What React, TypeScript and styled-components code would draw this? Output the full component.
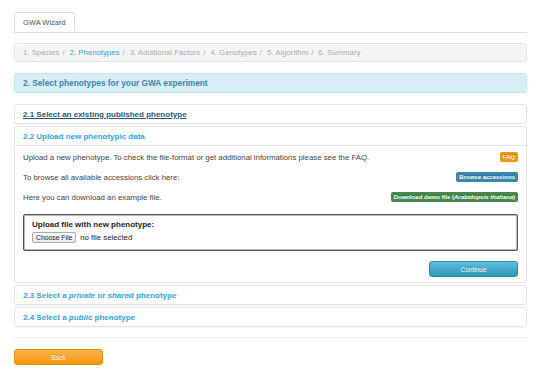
import React from "react";
import styled, { createGlobalStyle } from "styled-components";

const Global = createGlobalStyle`
  html, body { margin: 0; padding: 0; background: #fff; }
  body { font-family: "Liberation Sans", Arial, sans-serif; font-size: 7.8px; color: #333; }
`;

const Page = styled.div`
  width: 513px;
  padding: 12px 0 0 14px;
`;

const Tabs = styled.div`
  display: flex;
  border-bottom: 1px solid #ddd;
  height: 20px;
`;

const Tab = styled.div`
  height: 20px;
  box-sizing: border-box;
  padding: 0 8px;
  display: flex;
  align-items: center;
  border: 1px solid #ddd;
  border-bottom: 1px solid #fff;
  border-radius: 3px 3px 0 0;
  background: #fff;
  color: #555;
  font-size: 7.5px;
  margin-bottom: -1px;
`;

const Breadcrumb = styled.div`
  margin-top: 10px;
  height: 19px;
  box-sizing: border-box;
  border: 1px solid #e3e3e3;
  border-radius: 3px;
  background: #f5f5f5;
  display: flex;
  align-items: center;
  padding-left: 8px;
  color: #999;
  box-shadow: inset 0 1px 0 #fff;
`;

const Crumb = styled.span<{ $active?: boolean }>`
  color: ${(p) => (p.$active ? "#2fa4e7" : "#aaa")};
`;

const Sep = styled.span`
  color: #aaa;
  padding: 0 5px 0 3px;
`;

const Alert = styled.div`
  margin-top: 11px;
  height: 20px;
  box-sizing: border-box;
  border: 1px solid #bce8f1;
  border-radius: 3px;
  background: #d9edf7;
  color: #3a87ad;
  font-weight: bold;
  font-size: 8.3px;
  display: flex;
  align-items: center;
  padding-left: 8px;
`;

const Accordion = styled.div`
  margin-top: 11px;
  display: flex;
  flex-direction: column;
  gap: 2px;
`;

const Group = styled.div`
  border: 1px solid #e5e5e5;
  border-radius: 3px;
  box-shadow: 0 1px 1px rgba(0, 0, 0, 0.04);
`;

const Heading = styled.div<{ $open?: boolean }>`
  height: 18px;
  display: flex;
  align-items: center;
  padding-left: 8px;
  font-weight: bold;
  font-size: 8px;
  color: #2fa4e7;
  border-bottom: ${(p) => (p.$open ? "1px solid #e5e5e5" : "none")};
`;

const HeadLink = styled.span<{ $hover?: boolean }>`
  color: ${(p) => (p.$hover ? "#2a5a75" : "#2fa4e7")};
  text-decoration: ${(p) => (p.$hover ? "underline" : "none")};
`;

const Body = styled.div`
  padding: 1px 8px 5px 8px;
`;

const Row = styled.div`
  height: 20px;
  display: flex;
  align-items: center;
  justify-content: space-between;
  color: #444;
`;

const Badge = styled.span<{ $bg: string }>`
  background: ${(p) => p.$bg};
  color: #fff;
  font-weight: bold;
  font-size: 6px;
  padding: 1px 3px;
  border-radius: 2px;
  line-height: 8px;
  text-shadow: 0 -1px 0 rgba(0, 0, 0, 0.25);
`;

const UploadBox = styled.div`
  margin-top: 7px;
  height: 37px;
  box-sizing: border-box;
  border: 1px solid #555;
  border-radius: 2px;
  box-shadow: inset 0 0 0 0.5px #777;
  padding: 5px 8px;
  display: flex;
  flex-direction: column;
  gap: 3px;
`;

const UploadLabel = styled.div`
  font-weight: bold;
  font-size: 8px;
  color: #222;
`;

const FileRow = styled.div`
  display: flex;
  align-items: center;
  gap: 4px;
  color: #222;
`;

const FileButton = styled.span`
  height: 11px;
  box-sizing: border-box;
  padding: 0 3px;
  border: 1px solid #aaa;
  border-radius: 2px;
  background: linear-gradient(#fff, #e6e6e6);
  font-size: 6.8px;
  display: flex;
  align-items: center;
  color: #222;
`;

const Actions = styled.div`
  margin-top: 10px;
  display: flex;
  justify-content: flex-end;
`;

const Button = styled.div<{ $from: string; $to: string; $border: string; $w: number }>`
  width: ${(p) => p.$w}px;
  height: 16px;
  box-sizing: border-box;
  display: flex;
  align-items: center;
  justify-content: center;
  color: #fff;
  font-size: 6.5px;
  border-radius: 3px;
  border: 1px solid ${(p) => p.$border};
  background: linear-gradient(${(p) => p.$from}, ${(p) => p.$to});
  text-shadow: 0 -1px 0 rgba(0, 0, 0, 0.2);
`;

const Rule = styled.div`
  margin-top: 10px;
  border-top: 1px solid #eee;
`;

const Footer = styled.div`
  margin-top: 11px;
`;

export default function App() {
  return (
    <>
      <Global />
      <Page>
        <Tabs>
          <Tab>GWA Wizard</Tab>
        </Tabs>
        <Breadcrumb>
          <Crumb>1. Species</Crumb>
          <Sep>/</Sep>
          <Crumb $active>2. Phenotypes</Crumb>
          <Sep>/</Sep>
          <Crumb>3. Additional Factors</Crumb>
          <Sep>/</Sep>
          <Crumb>4. Genotypes</Crumb>
          <Sep>/</Sep>
          <Crumb>5. Algorithm</Crumb>
          <Sep>/</Sep>
          <Crumb>6. Summary</Crumb>
        </Breadcrumb>
        <Alert>2. Select phenotypes for your GWA experiment</Alert>
        <Accordion>
          <Group>
            <Heading>
              <HeadLink $hover>2.1 Select an existing published phenotype</HeadLink>
            </Heading>
          </Group>
          <Group>
            <Heading $open>
              <HeadLink>2.2 Upload new phenotypic data</HeadLink>
            </Heading>
            <Body>
              <Row>
                <span>Upload a new phenotype. To check the file-format or get additional informations please see the FAQ.</span>
                <Badge $bg="#f89406">FAQ</Badge>
              </Row>
              <Row>
                <span>To browse all available accessions click here:</span>
                <Badge $bg="#3a87ad">Browse accessions</Badge>
              </Row>
              <Row>
                <span>Here you can download an example file.</span>
                <Badge $bg="#468847">
                  Download demo file (<i>Arabidopsis thaliana</i>)
                </Badge>
              </Row>
              <UploadBox>
                <UploadLabel>Upload file with new phenotype:</UploadLabel>
                <FileRow>
                  <FileButton>Choose File</FileButton>
                  <span>no file selected</span>
                </FileRow>
              </UploadBox>
              <Actions>
                <Button $w={89} $from="#5bc0de" $to="#2f96b4" $border="#2a8bb0">
                  Continue
                </Button>
              </Actions>
            </Body>
          </Group>
          <Group>
            <Heading>
              <HeadLink>
                2.3 Select a <i>private</i> or <i>shared</i> phenotype
              </HeadLink>
            </Heading>
          </Group>
          <Group>
            <Heading>
              <HeadLink>
                2.4 Select a <i>public</i> phenotype
              </HeadLink>
            </Heading>
          </Group>
        </Accordion>
        <Rule />
        <Footer>
          <Button $w={89} $from="#fbb450" $to="#f89406" $border="#e38d13">
            Back
          </Button>
        </Footer>
      </Page>
    </>
  );
}
